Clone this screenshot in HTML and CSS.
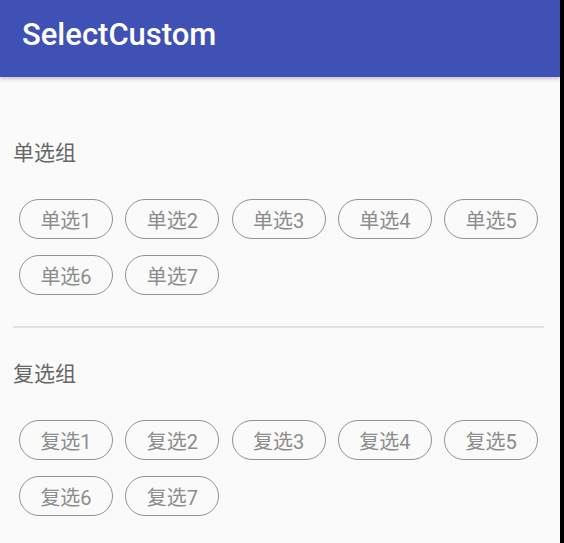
FILE: index.html
```html
<!DOCTYPE html>
<html lang="zh-CN">
<head>
<meta charset="utf-8">
<title>SelectCustom</title>
<link rel="stylesheet" href="styles.css">
</head>
<body>
<div class="screen">
  <header class="appbar">
    <h1 class="appbar-title">SelectCustom</h1>
  </header>
  <main class="content">
    <section class="group">
      <h2 class="group-title">单选组</h2>
      <div class="chips">
        <span class="chip">单选1</span>
        <span class="chip">单选2</span>
        <span class="chip">单选3</span>
        <span class="chip">单选4</span>
        <span class="chip">单选5</span>
        <span class="chip">单选6</span>
        <span class="chip">单选7</span>
      </div>
    </section>
    <hr class="divider">
    <section class="group group-second">
      <h2 class="group-title">复选组</h2>
      <div class="chips">
        <span class="chip">复选1</span>
        <span class="chip">复选2</span>
        <span class="chip">复选3</span>
        <span class="chip">复选4</span>
        <span class="chip">复选5</span>
        <span class="chip">复选6</span>
        <span class="chip">复选7</span>
      </div>
    </section>
  </main>
</div>
</body>
</html>
```

FILE: styles.css
```css
html {
  background: #000;
}
body {
  margin: 0;
  font-family: Roboto, "Noto Sans CJK SC", sans-serif;
}
.screen {
  width: 560px;
  min-height: 100vh;
  background: #fafafa;
}
.appbar {
  height: 77px;
  background: #3f51b5;
  display: flex;
  align-items: center;
  padding: 0 0 8px 22px;
  box-sizing: border-box;
  box-shadow: 0 2px 4px rgba(0, 0, 0, 0.22);
  position: relative;
}
.appbar-title {
  margin: 0;
  color: #fff;
  font-weight: 500;
  font-size: 31px;
  line-height: 36px;
}
.content {
  padding: 62px 16px 0 13px;
}
.group-title {
  margin: 0;
  font-weight: 400;
  font-size: 21px;
  line-height: 28px;
  color: #666;
}
.chips {
  display: flex;
  flex-wrap: wrap;
  column-gap: 12.3px;
  row-gap: 16px;
  margin-top: 32px;
  padding-left: 6px;
}
.chip {
  box-sizing: border-box;
  width: 94px;
  height: 40px;
  border: 1.5px solid #929292;
  border-radius: 20px;
  display: flex;
  align-items: center;
  justify-content: center;
  font-size: 20px;
  color: #8c8c8c;
}
.divider {
  margin: 31px 0 0;
  border: 0;
  height: 2px;
  background: #e2e2e2;
}
.group-second {
  margin-top: 32px;
}
```
